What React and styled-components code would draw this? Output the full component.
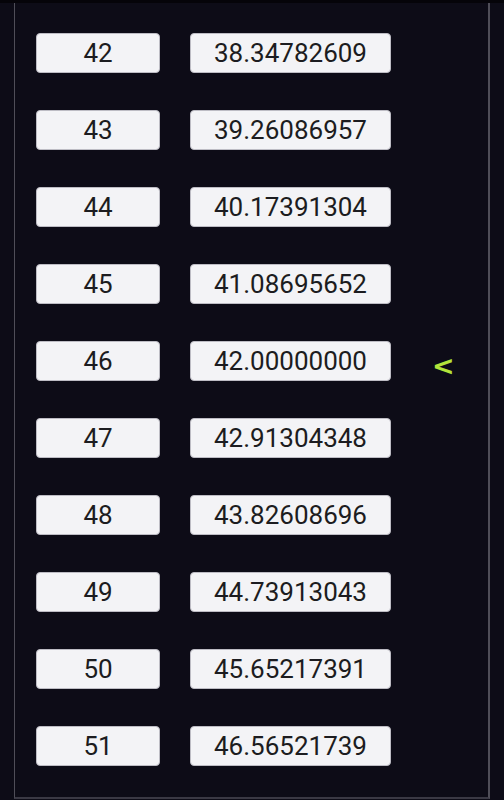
import React from 'react';
import styled, { createGlobalStyle } from 'styled-components';

const rows = [
  [42, '38.34782609'],
  [43, '39.26086957'],
  [44, '40.17391304'],
  [45, '41.08695652'],
  [46, '42.00000000', true],
  [47, '42.91304348'],
  [48, '43.82608696'],
  [49, '44.73913043'],
  [50, '45.65217391'],
  [51, '46.56521739'],
];

function App() {
  return (
    <Screen>
      <GlobalStyle />
      <TopStrip />
      <Panel>
        <List>
          {rows.map(([n, value, current]) => (
            <Row key={n}>
              <IndexBox>{n}</IndexBox>
              <ValueBox>{value}</ValueBox>
              {current && <Marker>&lt;</Marker>}
            </Row>
          ))}
        </List>
      </Panel>
    </Screen>
  );
}

const GlobalStyle = createGlobalStyle`
  html, body {
    margin: 0;
    padding: 0;
    background: #0d0c17;
  }
`;

const Screen = styled.div`
  width: 504px;
  height: 800px;
  overflow: hidden;
  background: #0d0c17;
  display: flex;
  flex-direction: column;
  font-family: Roboto, "Noto Sans", sans-serif;
`;

const TopStrip = styled.div`
  height: 3px;
  background: #050409;
`;

const Panel = styled.div`
  margin-left: 14px;
  width: 476px;
  height: 796px;
  box-sizing: border-box;
  border-left: 1px solid #4f4e58;
  border-right: 2px solid #4f4e58;
  border-bottom: 2px solid #3a3944;
`;

const List = styled.div`
  display: flex;
  flex-direction: column;
  gap: 37px;
  padding: 30px 0 0 21px;
`;

const Row = styled.div`
  display: flex;
  align-items: center;
  gap: 30px;
`;

const Box = styled.div`
  height: 40px;
  box-sizing: border-box;
  display: flex;
  align-items: center;
  justify-content: center;
  background: #f3f3f6;
  border: 1px solid #bdbcc4;
  border-radius: 4px;
  color: #1c1c20;
  font-size: 26px;
`;

const IndexBox = styled(Box)`
  width: 124px;
`;

const ValueBox = styled(Box)`
  width: 201px;
`;

const Marker = styled.span`
  margin-left: 11px;
  margin-top: 8px;
  color: #b3e43b;
  font-size: 27px;
  font-weight: 700;
  font-family: "DejaVu Sans", sans-serif;
`;

export default App;
